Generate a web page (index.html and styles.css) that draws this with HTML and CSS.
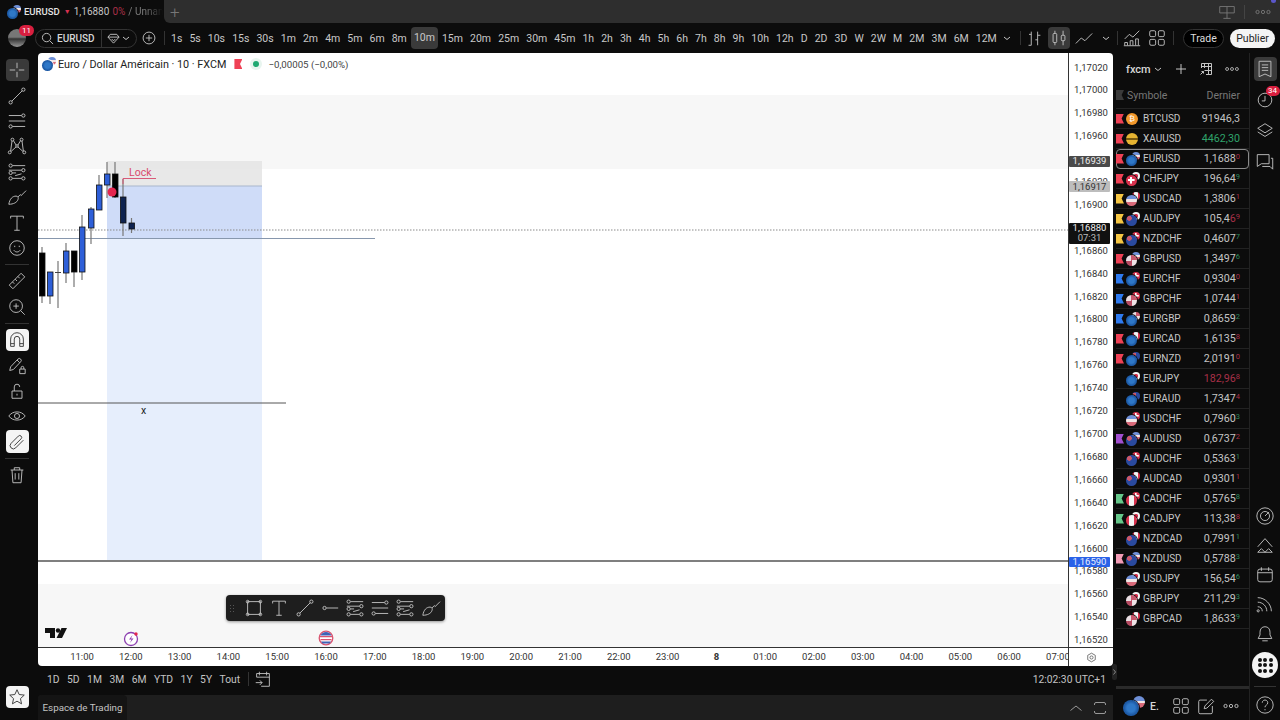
FILE: index.html
```html
<!DOCTYPE html>
<html lang="fr">
<head>
    <meta charset="UTF-8">
    <meta name="viewport" content="width=device-width, initial-scale=1.0">
    <title>EURUSD 1,16880</title>
    <link rel="stylesheet" href="styles.css">
</head>
<body>
    <svg class="icon-defs" width="0" height="0">
        <symbol id="i-line" viewBox="0 0 22 22"><circle cx="4" cy="18" r="1.8"/><circle cx="18" cy="4" r="1.8"/><path d="M5.3 16.7 16.7 5.3"/></symbol>
        <symbol id="i-lines" viewBox="0 0 22 22"><circle cx="18" cy="5" r="1.8"/><circle cx="4" cy="17" r="1.8"/><path d="M2 5h14M2 11h18M6 17h14"/></symbol>
        <symbol id="i-pitch" viewBox="0 0 22 22"><circle cx="6" cy="4" r="1.6"/><circle cx="16" cy="4" r="1.6"/><circle cx="3" cy="18" r="1.6"/><circle cx="19" cy="18" r="1.6"/><circle cx="11" cy="11" r="1.4"/><path d="M5.5 5.5 4 16.5M16.5 5.5 18 16.5M7 5l3 5M15 5l-3 5M4.500 17l5.500-5M17.500 17l-5.500-5"/></symbol>
        <symbol id="i-fib" viewBox="0 0 22 22"><circle cx="4" cy="4" r="1.8"/><circle cx="18" cy="9" r="1.8"/><circle cx="4" cy="12" r="1.8"/><circle cx="18" cy="18" r="1.8"/><circle cx="4" cy="18" r="1.8"/><path d="M6 4h14M2 9h14M6 12h4M6 18h10M9 15l7-2" /></symbol>
        <symbol id="i-brush" viewBox="0 0 22 22"><path d="M2 19c1-6 4-9 8-9 2 0 3 2 2 4-1 3-5 5-10 5ZM12 11l3-3M15 10l6-6"/></symbol>
        <symbol id="i-text" viewBox="0 0 22 22"><path d="M4 6V3.500h14V6M11 3.500V19M8 19h6"/></symbol>
        <symbol id="i-dots" viewBox="0 0 22 22"><circle cx="5" cy="11" r="1.800"/><circle cx="11" cy="11" r="1.800"/><circle cx="17" cy="11" r="1.800"/></symbol>
        <symbol id="i-grid" viewBox="0 0 22 22"><rect x="3" y="3" width="6.500" height="6.500" rx="1.500"/><rect x="12.500" y="3" width="6.500" height="6.500" rx="1.500"/><rect x="3" y="12.500" width="6.500" height="6.500" rx="1.500"/><rect x="12.500" y="12.500" width="6.500" height="6.500" rx="1.500"/></symbol>
        <symbol id="i-chevron" viewBox="0 0 10 10"><path d="M2 4l3 2.500L8 4"/></symbol>
    </svg>

    <div class="tabbar">
        <div class="tab-active">
            <span class="pair"><i class="eur"></i><i class="usd"></i></span>
            <span class="tab-sym">EURUSD</span>
            <span class="tab-down">▼</span>
            <span class="tab-price">1,16880</span>
            <span class="tab-pct">0%</span>
            <span class="tab-name">/ Unnan</span>
        </div>
        <div class="tab-rest">
            <span class="tab-plus">+</span>
            <span class="spacer"></span>
            <svg class="ico tab-monitor" viewBox="0 0 22 22"><path d="M3 5h16v7H3zM11 5v13M7 18h8M8 12v0"/></svg>
            <span class="tab-sep"></span>
            <span class="tab-more"><svg class="ico"><use href="#i-dots"/></svg><b></b></span>
        </div>
    </div>

    <div class="toolbar">
        <div class="avatar"><span class="avatar-badge">11</span></div>
        <div class="search">
            <div class="search-left">
                <svg class="ico-s" viewBox="0 0 14 14"><circle cx="6" cy="6" r="4.500"/><path d="m9.500 9.500 3.500 3.500"/></svg>
                <span>EURUSD</span>
            </div>
            <div class="search-right">
                <svg class="ico-s" viewBox="0 0 14 14"><path d="M3.500 2.500h7L13 5.500 7 12 1 5.500ZM1 5.500h12M5 7.500 7 9.500 9 7.500"/></svg>
                <svg class="ico-c"><use href="#i-chevron"/></svg>
            </div>
        </div>
        <svg class="ico plus-circle" viewBox="0 0 22 22"><circle cx="11" cy="11" r="6.500"/><path d="M11 7.500v7M7.500 11h7"/></svg>
        <span class="tool-sep first-sep"></span>
        <div class="frames">
            <span>1s</span><span>5s</span><span>10s</span><span>15s</span><span>30s</span><span>1m</span><span>2m</span><span>4m</span><span>5m</span><span>6m</span><span>8m</span><span class="frame-on">10m</span><span>15m</span><span>20m</span><span>25m</span><span>30m</span><span>45m</span><span>1h</span><span>2h</span><span>3h</span><span>4h</span><span>5h</span><span>6h</span><span>7h</span><span>8h</span><span>9h</span><span>10h</span><span>12h</span><span>D</span><span>2D</span><span>3D</span><span>W</span><span>2W</span><span>M</span><span>2M</span><span>3M</span><span>6M</span><span>12M</span>
        </div>
        <svg class="ico-c frames-more"><use href="#i-chevron"/></svg>
        <span class="tool-sep"></span>
        <svg class="ico bars-ico" viewBox="0 0 22 22"><path d="M8 4v15M8 7H5.500M5 19h3M15 4v15M15 8h3M12.500 13H15"/></svg>
        <span class="candle-on"><svg class="ico" viewBox="0 0 22 22"><rect x="4.500" y="6" width="4" height="10" rx="1"/><rect x="13.500" y="8" width="4" height="6" rx="1"/><path d="M6.500 3v3M6.500 16v3M15.500 3v5M15.500 14v5"/></svg></span>
        <svg class="ico line-ico" viewBox="0 0 22 22"><path d="M2 17l6-6 4 3 8-8"/></svg>
        <svg class="ico-c line-more"><use href="#i-chevron"/></svg>
        <span class="tool-sep"></span>
        <svg class="ico chart-ico" viewBox="0 0 22 22"><path d="M3 12l5-5 4 3 7-7M3 19v-3h3v3M9 19v-5h3v5M15 19v-7h3v7M2 19.500h18"/></svg>
        <svg class="ico grid-ico"><use href="#i-grid"/></svg>
        <span class="tool-sep"></span>
        <span class="btn-trade">Trade</span>
        <span class="btn-publish">Publier</span>
    </div>

    <div class="main">
        <div class="tools">
            <span class="tool tool-active"><svg class="ico" viewBox="0 0 22 22"><path d="M11 3v6M11 13v6M3 11h6M13 11h6"/></svg></span>
            <span class="tool"><svg class="ico"><use href="#i-line"/></svg></span>
            <span class="tool"><svg class="ico"><use href="#i-lines"/></svg></span>
            <span class="tool"><svg class="ico"><use href="#i-pitch"/></svg></span>
            <span class="tool"><svg class="ico"><use href="#i-fib"/></svg></span>
            <span class="tool"><svg class="ico"><use href="#i-brush"/></svg></span>
            <span class="tool"><svg class="ico"><use href="#i-text"/></svg></span>
            <span class="tool"><svg class="ico" viewBox="0 0 22 22"><circle cx="11" cy="11" r="8"/><path d="M8.500 8.500v1.500M13.500 8.500v1.500M7.500 13.500c2 2.500 5 2.500 7 0"/></svg></span>
            <span class="tool-div"></span>
            <span class="tool"><svg class="ico" viewBox="0 0 22 22"><path d="M2.500 15.500 15.500 2.500l4 4-13 13ZM6 12l2 2M9 9l2 2M12 6l2 2"/></svg></span>
            <span class="tool"><svg class="ico" viewBox="0 0 22 22"><circle cx="10" cy="10" r="7"/><path d="M15 15l4.500 4.500M10 7v6M7 10h6"/></svg></span>
            <span class="tool-div"></span>
            <span class="tool tool-white"><svg class="ico" viewBox="0 0 22 22"><path d="M4 18V10a7 7 0 0 1 14 0v8h-4v-8a3 3 0 0 0-6 0v8ZM4 15h4M14 15h4"/></svg></span>
            <span class="tool"><svg class="ico" viewBox="0 0 22 22"><path d="M3 17l1-4 8-8.500a2 2 0 0 1 3 3L7 16ZM11 5.500l3 3M14 15.500h6v5h-6zM15.500 15.500v-1.500a1.500 1.500 0 0 1 3 0v1.500"/></svg></span>
            <span class="tool"><svg class="ico" viewBox="0 0 22 22"><path d="M5.500 11h11v8h-11zM8 11V6.500a3 3 0 0 1 6 0M11 14v2"/></svg></span>
            <span class="tool"><svg class="ico" viewBox="0 0 22 22"><path d="M2 11c4-6 14-6 18 0-4 6-14 6-18 0Z"/><circle cx="11" cy="11" r="2.800"/></svg></span>
            <span class="tool tool-white"><svg class="ico" viewBox="0 0 22 22"><path d="M8 15l7.500-7.500a2.100 2.100 0 0 0-3-3L4.500 12.500a3.500 3.500 0 0 0 5 5L18 9"/></svg></span>
            <span class="tool-div"></span>
            <span class="tool"><svg class="ico" viewBox="0 0 22 22"><path d="M4 5.500h14M8 5.500V3h6v2.500M5.500 5.500l1 14h9l1-14M9 9v7M13 9v7"/></svg></span>
            <span class="spacer"></span>
            <span class="tool tool-white tool-star"><svg class="ico" viewBox="0 0 22 22"><path d="m11 3 2.400 5.300 5.600.6-4.200 3.900 1.200 5.700-5-2.900-5 2.900 1.200-5.700L3 8.900l5.600-.6Z"/></svg></span>
        </div>

        <div class="center">
            <div class="chart">
                <div class="pane">
                    <div class="legend">
                        <span class="pair"><i class="eur"></i><i class="usd"></i></span>
                        <span class="legend-title">Euro / Dollar Américain · 10 · FXCM</span>
                        <span class="flag flag-red legend-flag"></span>
                        <span class="legend-dot"></span>
                        <span class="legend-change">−0,00005 (−0,00%)</span>
                    </div>

                    <svg class="plot" viewBox="38 53 1030 594" width="1030" height="594">
                        <rect x="38" y="95" width="1030" height="74" fill="#f7f7f7"/>
                        <rect x="38" y="584" width="1030" height="63" fill="#f7f7f7"/>
                        <!-- position box -->
                        <rect x="107" y="161" width="155" height="25" fill="#e4e4e4" opacity=".85"/>
                        <rect x="107" y="186" width="155" height="52" fill="#cfdcf8"/>
                        <rect x="107" y="238" width="155" height="322" fill="#e6eefc"/>
                        <path d="M107 186h155" stroke="#a9b6cc"/>
                        <path d="M38 230h1030" stroke="#8a8a8a" stroke-dasharray="1.500 1.500"/>
                        <path d="M38 238.500h337" stroke="#8797ad"/>
                        <path d="M38 403h248" stroke="#555"/>
                        <path d="M38 561h1030" stroke="#555" stroke-width="1.500"/>
                        <!-- wicks -->
                        <g stroke="#777" stroke-width="1.200">
                            <path d="M42 247v56M50 272v32M58 261v47M66 243v40M74 251v36M82 215v65M91 207v37M99 175v35M107 162v36M115 162v36M123 179v57M131.500 218v15"/>
                        </g>
                        <!-- candles -->
                        <g stroke="#111" stroke-width=".8">
                            <rect x="39.500" y="253" width="5.500" height="43" fill="#000"/>
                            <rect x="47.500" y="272" width="5.500" height="24" fill="#2e5fd8"/>
                            <rect x="63.500" y="251" width="5.500" height="22" fill="#2e5fd8"/>
                            <rect x="71.500" y="251" width="5.500" height="21" fill="#000"/>
                            <rect x="79.500" y="227" width="5.500" height="45" fill="#2e5fd8"/>
                            <rect x="88.500" y="209" width="5.500" height="19" fill="#2e5fd8"/>
                            <rect x="96.500" y="185" width="5.500" height="25" fill="#2e5fd8"/>
                            <rect x="104.500" y="174" width="5.500" height="11" fill="#2e5fd8"/>
                            <rect x="112.500" y="174" width="5.500" height="23" fill="#000"/>
                            <rect x="120.500" y="197" width="5.500" height="26" fill="#0f2350"/>
                            <rect x="129" y="223" width="5.500" height="6" fill="#0f2350"/>
                        </g>
                        <path d="M55 272.500h6" stroke="#444"/>
                        <circle cx="112" cy="192" r="4.500" fill="#e5264f"/>
                        <path d="M123 184v-5.500h33" fill="none" stroke="#d95a78"/>
                        <text x="129" y="175.500" class="plot-lock">Lock</text>
                        <text x="141" y="414" class="plot-x">x</text>
                        <!-- logo -->
                        <path d="M45 628h10v10h-5v-5h-5ZM67 628l-5 10h-5.500l5-10Z" fill="#111"/>
                        <circle cx="58" cy="630.500" r="2.200" fill="#111"/>
                        <!-- events -->
                        <circle cx="131" cy="639" r="6.500" fill="#fff" stroke="#8c3fb0" stroke-width="1.300"/>
                        <path d="m132.500 635-3.500 4.500h2.500l-1.500 3.500 3.500-4.500H131Z" fill="#8c3fb0"/>
                        <circle cx="136" cy="634" r="1.700" fill="#e5264f"/>
                        <circle cx="326" cy="638" r="6.800" fill="#fff" stroke="#d9536f" stroke-width="1.300"/>
                        <path d="M320 636h12v1.300h-12ZM320.500 639h11v1.300h-11Z" fill="#d9536f"/>
                        <path d="M320.500 635.500a6 6 0 0 1 11 0ZM321 641.500h10l-1.500 2h-7Z" fill="#3f62b5"/>
                    </svg>

                    <div class="draw-bar">
                        <span class="draw-grip"></span>
                        <svg class="ico" viewBox="0 0 22 22"><rect x="4" y="4" width="14" height="14"/><circle cx="4" cy="4" r="1.500"/><circle cx="18" cy="4" r="1.500"/><circle cx="4" cy="18" r="1.500"/><circle cx="18" cy="18" r="1.500"/></svg>
                        <svg class="ico"><use href="#i-text"/></svg>
                        <svg class="ico"><use href="#i-line"/></svg>
                        <svg class="ico" viewBox="0 0 22 22"><circle cx="5" cy="11" r="1.800"/><path d="M7 11h13"/></svg>
                        <svg class="ico"><use href="#i-fib"/></svg>
                        <svg class="ico"><use href="#i-lines"/></svg>
                        <svg class="ico"><use href="#i-fib"/></svg>
                        <svg class="ico"><use href="#i-brush"/></svg>
                    </div>
                </div>

                <div class="axis-y">
                    <span>1,17020</span><span>1,17000</span><span>1,16980</span><span>1,16960</span><span class="hid">1,16940</span><span>1,16920</span><span>1,16900</span><span class="hid">1,16880</span><span>1,16860</span><span>1,16840</span><span>1,16820</span><span>1,16800</span><span>1,16780</span><span>1,16760</span><span>1,16740</span><span>1,16720</span><span>1,16700</span><span>1,16680</span><span>1,16660</span><span>1,16640</span><span>1,16620</span><span>1,16600</span><span>1,16580</span><span>1,16560</span><span>1,16540</span><span>1,16520</span>
                    <div class="tag tag-dark">1,16939</div>
                    <div class="tag tag-grey">1,16917</div>
                    <div class="tag tag-black">1,16880<br><em>07:31</em></div>
                    <div class="tag tag-blue">1,16590</div>
                </div>

                <div class="axis-x">
                    <span>11:00</span><span>12:00</span><span>13:00</span><span>14:00</span><span>15:00</span><span>16:00</span><span>17:00</span><span>18:00</span><span>19:00</span><span>20:00</span><span>21:00</span><span>22:00</span><span>23:00</span><span class="day">8</span><span>01:00</span><span>02:00</span><span>03:00</span><span>04:00</span><span>05:00</span><span>06:00</span><span>07:00</span>
                </div>
                <div class="axis-corner">
                    <svg class="ico-m" viewBox="0 0 14 14"><path d="M7 1.500 11.800 4.200v5.600L7 12.500 2.200 9.800V4.200Z"/><circle cx="7" cy="7" r="2"/></svg>
                </div>
            </div>

            <div class="range">
                <span>1D</span><span>5D</span><span>1M</span><span>3M</span><span>6M</span><span>YTD</span><span>1Y</span><span>5Y</span><span>Tout</span>
                <span class="range-sep"></span>
                <svg class="ico range-ico" viewBox="0 0 22 22"><path d="M4 9V5h14v14H9M7 3v4M15 3v4M4 9h14M3 15h7M7.500 12.500 10 15l-2.500 2.500"/></svg>
                <span class="spacer"></span>
                <span class="range-clock">12:02:30 UTC+1</span>
                <span class="collapse-handle"><svg viewBox="0 0 5 16"><path d="M1.500 5.500 3.500 8l-2 2.500"/></svg></span>
            </div>

            <div class="status">
                <span class="status-tab">Espace de Trading</span>
                <span class="spacer"></span>
                <svg class="ico-m" viewBox="0 0 14 14"><path d="M1.500 9.500 7 5l5.500 4.500"/></svg>
                <svg class="ico-m status-max" viewBox="0 0 14 14"><path d="M1.500 4V3a1.500 1.500 0 0 1 1.500-1.500h8A1.500 1.500 0 0 1 12.500 3v1M1.500 10v1A1.500 1.500 0 0 0 3 12.500h8a1.500 1.500 0 0 0 1.500-1.500v-1"/></svg>
            </div>
        </div>

        <div class="watch">
            <div class="watch-top">
                <span class="watch-name">fxcm</span>
                <svg class="ico-c"><use href="#i-chevron"/></svg>
                <svg class="ico-m watch-add" viewBox="0 0 14 14"><path d="M7 2v10M2 7h10"/></svg>
                <svg class="ico-m watch-table" viewBox="0 0 14 14"><path d="M2.500 6V1.500h10v11H7M2.500 4.500h10M5.500 1.500V6M9.500 1.500v11M5.500 8.500h7M1.500 12.500l3-3M2.500 9.500h2v2"/></svg>
                <svg class="ico watch-more"><use href="#i-dots"/></svg>
            </div>
            <div class="watch-head"><span class="flag flag-dim"></span><span>Symbole</span><span class="spacer"></span><span>Dernier</span></div>
            <div class="rows">
                <div class="row"><span class="flag flag-red"></span><span class="pair"><i class="btc">₿</i></span><span class="sym">BTCUSD</span><span class="price">91946,3</span></div>
                <div class="row"><span class="flag flag-red"></span><span class="pair"><i class="xau"></i></span><span class="sym">XAUUSD</span><span class="price up">4462,30</span></div>
                <div class="row row-on"><span class="flag flag-red"></span><span class="pair"><i class="eur"></i><i class="usd"></i></span><span class="sym">EURUSD</span><span class="price">1,1688<sup class="dn">0</sup></span></div>
                <div class="row"><span class="flag flag-red"></span><span class="pair"><i class="chf"></i><i class="jpy"></i></span><span class="sym">CHFJPY</span><span class="price">196,64<sup class="gr">9</sup></span></div>
                <div class="row"><span class="flag flag-yellow"></span><span class="pair"><i class="usd"></i><i class="cad"></i></span><span class="sym">USDCAD</span><span class="price">1,3806<sup class="dn">1</sup></span></div>
                <div class="row"><span class="flag flag-yellow"></span><span class="pair"><i class="aud"></i><i class="jpy"></i></span><span class="sym">AUDJPY</span><span class="price">105,4<b class="dn">6</b><sup class="dn">9</sup></span></div>
                <div class="row"><span class="flag flag-yellow"></span><span class="pair"><i class="aud"></i><i class="chf"></i></span><span class="sym">NZDCHF</span><span class="price">0,4607<sup class="gr">7</sup></span></div>
                <div class="row"><span class="flag flag-red"></span><span class="pair"><i class="gbp"></i><i class="usd"></i></span><span class="sym">GBPUSD</span><span class="price">1,3497<sup class="gr">6</sup></span></div>
                <div class="row"><span class="flag flag-blue"></span><span class="pair"><i class="eur"></i><i class="chf"></i></span><span class="sym">EURCHF</span><span class="price">0,9304<sup class="dn">0</sup></span></div>
                <div class="row"><span class="flag flag-blue"></span><span class="pair"><i class="gbp"></i><i class="chf"></i></span><span class="sym">GBPCHF</span><span class="price">1,0744<sup class="dn">1</sup></span></div>
                <div class="row"><span class="flag flag-blue"></span><span class="pair"><i class="eur"></i><i class="gbp"></i></span><span class="sym">EURGBP</span><span class="price">0,8659<sup class="gr">2</sup></span></div>
                <div class="row"><span class="flag flag-red"></span><span class="pair"><i class="eur"></i><i class="cad"></i></span><span class="sym">EURCAD</span><span class="price">1,6135<sup class="dn">8</sup></span></div>
                <div class="row"><span class="flag flag-red"></span><span class="pair"><i class="eur"></i><i class="aud"></i></span><span class="sym">EURNZD</span><span class="price">2,0191<sup class="dn">0</sup></span></div>
                <div class="row"><span class="flag"></span><span class="pair"><i class="eur"></i><i class="jpy"></i></span><span class="sym">EURJPY</span><span class="price down">182,96<sup class="dn">8</sup></span></div>
                <div class="row"><span class="flag"></span><span class="pair"><i class="eur"></i><i class="aud"></i></span><span class="sym">EURAUD</span><span class="price">1,7347<sup class="dn">4</sup></span></div>
                <div class="row"><span class="flag"></span><span class="pair"><i class="usd"></i><i class="chf"></i></span><span class="sym">USDCHF</span><span class="price">0,7960<sup class="gr">3</sup></span></div>
                <div class="row"><span class="flag flag-purple"></span><span class="pair"><i class="aud"></i><i class="usd"></i></span><span class="sym">AUDUSD</span><span class="price">0,6737<sup class="dn">2</sup></span></div>
                <div class="row"><span class="flag"></span><span class="pair"><i class="aud"></i><i class="chf"></i></span><span class="sym">AUDCHF</span><span class="price">0,5363<sup class="gr">1</sup></span></div>
                <div class="row"><span class="flag"></span><span class="pair"><i class="aud"></i><i class="cad"></i></span><span class="sym">AUDCAD</span><span class="price">0,9301<sup class="dn">1</sup></span></div>
                <div class="row"><span class="flag flag-green"></span><span class="pair"><i class="cad"></i><i class="chf"></i></span><span class="sym">CADCHF</span><span class="price">0,5765<sup class="gr">8</sup></span></div>
                <div class="row"><span class="flag flag-green"></span><span class="pair"><i class="cad"></i><i class="jpy"></i></span><span class="sym">CADJPY</span><span class="price">113,38<sup class="dn">8</sup></span></div>
                <div class="row"><span class="flag"></span><span class="pair"><i class="aud"></i><i class="cad"></i></span><span class="sym">NZDCAD</span><span class="price">0,7991<sup class="gr">1</sup></span></div>
                <div class="row"><span class="flag flag-pink"></span><span class="pair"><i class="aud"></i><i class="usd"></i></span><span class="sym">NZDUSD</span><span class="price">0,5788<sup class="gr">3</sup></span></div>
                <div class="row"><span class="flag"></span><span class="pair"><i class="usd"></i><i class="jpy"></i></span><span class="sym">USDJPY</span><span class="price">156,54<sup class="gr">6</sup></span></div>
                <div class="row"><span class="flag"></span><span class="pair"><i class="gbp"></i><i class="jpy"></i></span><span class="sym">GBPJPY</span><span class="price">211,29<sup class="gr">3</sup></span></div>
                <div class="row"><span class="flag"></span><span class="pair"><i class="gbp"></i><i class="cad"></i></span><span class="sym">GBPCAD</span><span class="price">1,8633<sup class="gr">9</sup></span></div>
            </div>
            <span class="spacer"></span>
            <div class="watch-foot">
                <span class="pair pair-big"><i class="eur"></i><i class="usd"></i></span>
                <span class="foot-name">E.</span>
                <span class="spacer"></span>
                <svg class="ico"><use href="#i-grid"/></svg>
                <svg class="ico" viewBox="0 0 22 22"><path d="M18 11v7a1.500 1.500 0 0 1-1.500 1.500h-12A1.500 1.500 0 0 1 3 18V6a1.500 1.500 0 0 1 1.500-1.500H12M9 14l.7-3L17 3.500 19.500 6l-7.500 7.300Z"/></svg>
                <svg class="ico"><use href="#i-dots"/></svg>
            </div>
        </div>

        <div class="rail">
            <span class="rail-btn rail-on"><svg class="ico" viewBox="0 0 22 22"><path d="M4.500 2.500h13v17L11 16.500l-6.500 3ZM7.500 6.500h7M7.500 9.500h7M7.500 12.500h7"/></svg></span>
            <span class="rail-btn rail-alert"><svg class="ico" viewBox="0 0 22 22"><circle cx="11" cy="11" r="7.500"/><path d="M11 6.500V12H7.500"/></svg><b class="rail-badge">34</b></span>
            <span class="rail-btn rail-layers"><svg class="ico" viewBox="0 0 22 22"><path d="m11 3 8 5-8 5-8-5ZM3 12l8 5 8-5"/></svg></span>
            <span class="rail-btn"><svg class="ico" viewBox="0 0 22 22"><path d="M2.500 4h13v10H7l-4.500 3ZM17.500 8h2v12l-3-3H8"/></svg></span>
            <span class="spacer"></span>
            <span class="rail-btn"><svg class="ico" viewBox="0 0 22 22"><circle cx="11" cy="11" r="9"/><circle cx="11" cy="11" r="5"/><path d="m11 11 4.500-4.500"/></svg></span>
            <span class="rail-btn"><svg class="ico" viewBox="0 0 22 22"><path d="m3 13 8-9 8 9M3 19l4-4 4 4 4-4 4 4M3 19h16"/></svg></span>
            <span class="rail-btn"><svg class="ico" viewBox="0 0 22 22"><rect x="3" y="4.500" width="16" height="14" rx="2.500"/><path d="M7 2.500v4M15 2.500v4M3 8.500h16"/></svg></span>
            <span class="rail-btn"><svg class="ico" viewBox="0 0 22 22"><path d="M3 4c8 0 15 7 15 15M3 9c5.500 0 10 4.500 10 10M3 14c3 0 5 2 5 5"/><circle cx="3.500" cy="18.500" r="1.200"/></svg></span>
            <span class="rail-btn"><svg class="ico" viewBox="0 0 22 22"><path d="M11 3c-3.500 0-5.500 2.500-5.500 6v3L3.500 16h15l-2-4V9c0-3.500-2-6-5.500-6ZM8 18.500h6"/></svg></span>
            <span class="rail-dots"><i></i><i></i><i></i><i></i><i></i><i></i><i></i><i></i><i></i></span>
            <span class="rail-div"></span>
            <span class="rail-btn"><svg class="ico" viewBox="0 0 22 22"><circle cx="11" cy="11" r="9"/><path d="M8 8.500a3 3 0 1 1 4.500 2.600c-1 .6-1.500 1.100-1.500 2.400M11 15.500v1.300"/></svg></span>
        </div>
    </div>
</body>
</html>
```

FILE: styles.css
```css
* {
    box-sizing: border-box;
}
html, body {
    margin: 0;
    height: 720px;
    overflow: hidden;
}
body {
    font-family: Roboto, "Liberation Sans", sans-serif;
    background-color: #0c0c0c;
    color: #d6d6d6;
    font-size: 11px;
}
.icon-defs {
    position: absolute;
}
.spacer {
    flex: 1;
}
.ico, .ico-s, .ico-m, .ico-c {
    fill: none;
    stroke: #c4c4c4;
    stroke-width: 1;
    flex: none;
}
.ico {
    width: 20px;
    height: 20px;
}
.ico-s {
    width: 13px;
    height: 13px;
}
.ico-m {
    width: 14px;
    height: 14px;
}
.ico-c {
    width: 10px;
    height: 10px;
}

/* pair icons */
.pair {
    --ring: #0c0c0c;
    position: relative;
    display: inline-block;
    width: 14px;
    height: 14px;
    flex: none;
}
.pair i {
    position: absolute;
    left: 0;
    bottom: 0;
    width: 11px;
    height: 11px;
    border-radius: 50%;
    font-style: normal;
    z-index: 1;
    box-shadow: 0 0 0 1px var(--ring);
}
.pair i + i {
    left: auto;
    right: 0;
    top: 0;
    bottom: auto;
    width: 8px;
    height: 8px;
    z-index: 0;
    box-shadow: none;
}
.legend .pair {
    --ring: #fff;
}
.eur {
    background: radial-gradient(circle, #2f78c8 0 35%, #1d5aa6 60%);
}
.usd {
    background: linear-gradient(180deg, #6f90d8 0 40%, #f2e6e6 40% 60%, #d96a7a 60%);
}
.gbp {
    background: conic-gradient(#c9586c 0 25%, #efe3e6 25% 50%, #b74c63 50% 75%, #e9dde2 75%);
}
.jpy {
    background: radial-gradient(circle, #d9304f 0 35%, #f4f4f4 40%);
}
.chf {
    background: linear-gradient(#fff, #fff) center / 60% 20% no-repeat, linear-gradient(#fff, #fff) center / 20% 60% no-repeat, #d8324e;
}
.cad {
    background: linear-gradient(90deg, #d8324e 0 25%, #f4f4f4 25% 75%, #d8324e 75%);
}
.aud {
    background: radial-gradient(circle at 30% 30%, #c9586c 0 20%, #2a4aa0 25%);
}
.pair .btc {
    bottom: 1px;
    width: 12px;
    height: 12px;
    background-color: #f2982c;
    color: #fff;
    font-size: 8px;
    line-height: 12px;
    text-align: center;
}
.pair .xau {
    bottom: 1px;
    width: 12px;
    height: 12px;
    background: linear-gradient(#0000 0 45%, #7a5a10 45% 55%, #0000 55%), #e6b432;
}
.pair-big {
    width: 22px;
    height: 20px;
}
.pair-big i {
    width: 16px;
    height: 16px;
}
.pair-big i + i {
    width: 12px;
    height: 12px;
}

/* flags */
.flag {
    display: block;
    width: 8px;
    height: 10px;
    flex: none;
    clip-path: polygon(0 0, 100% 0, 70% 50%, 100% 100%, 0 100%);
}
.flag-red { background-color: #ef4155; }
.flag-yellow { background-color: #f5c542; }
.flag-blue { background-color: #2f7bf0; }
.flag-purple { background-color: #a24fd0; }
.flag-green { background-color: #66c78a; }
.flag-pink { background-color: #f29bb5; }
.flag-dim { background-color: #3a3a3a; }

/* tabs */
.tabbar {
    display: flex;
    height: 23px;
}
.tab-active {
    display: flex;
    align-items: center;
    width: 164px;
    padding-left: 7px;
    gap: 3px;
    font-size: 10px;
    white-space: nowrap;
    overflow: hidden;
}
.tab-sym {
    font-weight: 500;
    font-size: 9.500px;
    color: #e4e4e4;
}
.tab-down {
    color: #d6304f;
    font-size: 7px;
    margin-left: 1px;
}
.tab-price {
    color: #c4c4c4;
}
.tab-pct {
    color: #a83048;
}
.tab-name {
    color: #7c7c7c;
    -webkit-mask-image: linear-gradient(90deg, #000 50%, #0000);
    mask-image: linear-gradient(90deg, #000 50%, #0000);
}
.tab-rest {
    flex: 1;
    display: flex;
    align-items: center;
    background-color: #2e2e2e;
    border-bottom-left-radius: 6px;
    padding: 0 7px 0 6px;
}
.tab-plus {
    color: #777;
    font-size: 17px;
    font-weight: 300;
}
.tab-monitor {
    stroke: #777;
}
.tab-sep {
    width: 1px;
    height: 14px;
    background-color: #444;
    margin: 0 8px 0 7px;
}
.tab-more {
    position: relative;
    display: flex;
}
.tab-more .ico {
    stroke: #777;
}
.tab-more b {
    position: absolute;
    top: -4px;
    right: -3px;
    width: 5px;
    height: 5px;
    border-radius: 50%;
    background-color: #5b57c9;
}

/* toolbar */
.toolbar {
    display: flex;
    align-items: center;
    height: 30px;
    padding-left: 8px;
}
.avatar {
    position: relative;
    width: 18px;
    height: 18px;
    border-radius: 50%;
    background: linear-gradient(#777 0 45%, #333 55%, #999);
    flex: none;
}
.avatar-badge {
    position: absolute;
    top: -4px;
    left: 11px;
    width: 15px;
    height: 11px;
    border-radius: 6px;
    background-color: #d81f3f;
    color: #fff;
    font-size: 8px;
    line-height: 11px;
    text-align: center;
}
.search {
    display: flex;
    align-items: center;
    width: 102px;
    height: 19px;
    margin-left: 9px;
    border: 1px solid #333;
    border-radius: 10px;
    flex: none;
}
.search-left {
    display: flex;
    align-items: center;
    gap: 3px;
    width: 66px;
    padding-left: 5px;
    height: 100%;
    border-right: 1px solid #333;
    font-weight: 500;
    font-size: 10px;
}
.search-right {
    display: flex;
    align-items: center;
    gap: 1px;
    padding-left: 5px;
}
.plus-circle {
    margin-left: 2px;
    margin-right: 5px;
}
.tool-sep {
    width: 1px;
    height: 14px;
    background-color: #333;
    flex: none;
}
.first-sep {
    margin-right: 6px;
}
.frames {
    display: flex;
    align-items: center;
    width: 826px;
    flex: none;
    justify-content: space-between;
    font-size: 10.500px;
    color: #c8c8c8;
}
.frame-on {
    background-color: #3a3a3a;
    border-radius: 4px;
    padding: 0 3px;
    margin: 0 -3px;
    height: 22px;
    line-height: 22px;
}
.frames-more {
    margin: 0 8px 0 5px;
}
.bars-ico {
    margin: 0 4px 0 3px;
}
.candle-on {
    display: flex;
    align-items: center;
    justify-content: center;
    width: 22px;
    height: 22px;
    background-color: #3a3a3a;
    border-radius: 4px;
    flex: none;
}
.line-ico {
    margin-left: 4px;
}
.line-more {
    margin: 0 6px 0 7px;
}
.chart-ico {
    margin-left: 4px;
}
.grid-ico {
    margin: 0 6px 0 5px;
}
.btn-trade {
    width: 41px;
    height: 19px;
    margin-left: 9px;
    border: 1px solid #333;
    border-radius: 10px;
    background-color: #000;
    text-align: center;
    line-height: 17px;
    font-size: 10.500px;
    color: #ddd;
    flex: none;
}
.btn-publish {
    width: 45px;
    height: 19px;
    margin-left: 6px;
    border-radius: 10px;
    background-color: #f4f4f4;
    color: #222;
    text-align: center;
    line-height: 19px;
    font-size: 10.500px;
    flex: none;
}

/* layout */
.main {
    display: flex;
    height: 667px;
}
.tools {
    display: flex;
    flex-direction: column;
    align-items: center;
    width: 38px;
    padding: 6px 4px 12px 0;
    flex: none;
    gap: 3px;
}
.tool {
    display: flex;
    align-items: center;
    justify-content: center;
    width: 23px;
    height: 22.400px;
    border-radius: 4px;
    flex: none;
}
.tool-active {
    background-color: #3a3a3a;
}
.tool-white {
    background-color: #f4f4f4;
}
.tool-white .ico {
    stroke: #333;
}
.tool-div {
    width: 24px;
    height: 1px;
    margin: 2px 0;
    background-color: #333;
    flex: none;
}
.center {
    display: flex;
    flex-direction: column;
    width: 1075px;
    flex: none;
}

/* chart */
.chart {
    display: grid;
    grid-template-columns: 1030px 45px;
    grid-template-rows: 594px 19px;
    height: 613px;
    flex: none;
    background-color: #fff;
    border-radius: 4px;
    overflow: hidden;
    color: #333;
}
.pane {
    position: relative;
}
.plot {
    display: block;
}
.plot-lock {
    font: 10.500px Roboto, sans-serif;
    fill: #d94a6c;
}
.plot-x {
    font: 10.500px Roboto, sans-serif;
    fill: #222;
}
.legend {
    position: absolute;
    top: 3px;
    left: 4px;
    display: flex;
    align-items: center;
    height: 16px;
    z-index: 1;
}
.legend-title {
    margin-left: 2px;
    font-size: 10.800px;
    color: #222;
}
.legend-flag {
    margin-left: 8px;
}
.legend-dot {
    width: 6px;
    height: 6px;
    margin: 0 9px 0 11px;
    border-radius: 50%;
    background-color: #1fa971;
    box-shadow: 0 0 0 3px #e8f5ef;
}
.legend-change {
    font-size: 9.700px;
    color: #444;
}
.draw-bar {
    position: absolute;
    left: 188px;
    top: 542px;
    display: flex;
    align-items: center;
    gap: 5.200px;
    width: 219px;
    height: 26px;
    padding-left: 3px;
    border-radius: 4px;
    background-color: #1e1e1e;
    box-shadow: 0 1px 3px #0006;
}
.draw-grip {
    width: 7px;
    height: 9px;
    margin-right: 3px;
    background: radial-gradient(circle, #555 1px, #0000 1px) 0 0 / 3px 3px;
}
.axis-y {
    position: relative;
    display: flex;
    flex-direction: column;
    padding-top: 3.500px;
    border-left: 1px solid #333;
    font-size: 9.500px;
    overflow: hidden;
}
.axis-y span {
    display: block;
    height: 22.920px;
    line-height: 22.920px;
    text-align: center;
    flex: none;
}
.axis-y .hid {
    visibility: hidden;
}
.tag {
    position: absolute;
    left: 0;
    right: 3px;
    text-align: center;
    font-size: 9.500px;
    line-height: 10px;
    border-radius: 1px;
}
.tag-dark {
    top: 103px;
    height: 11px;
    background-color: #4a4a4a;
    color: #eee;
}
.tag-grey {
    top: 128px;
    height: 11px;
    line-height: 11px;
    background-color: #bdbdbd;
    color: #333;
}
.tag-black {
    top: 170px;
    height: 21px;
    background-color: #111;
    color: #eee;
}
.tag-black em {
    font-style: normal;
    color: #bbb;
}
.tag-blue {
    top: 504px;
    height: 10px;
    background-color: #2a62e8;
    color: #e8eeff;
    line-height: 10px;
}
.axis-x {
    display: flex;
    padding-left: 19.600px;
    border-top: 1px solid #333;
    font-size: 9.500px;
    line-height: 18px;
    overflow: hidden;
    white-space: nowrap;
}
.axis-x span {
    width: 48.800px;
    text-align: center;
    flex: none;
}
.axis-x .day {
    font-weight: 700;
}
.axis-corner {
    display: flex;
    align-items: center;
    justify-content: center;
    border-top: 1px solid #333;
    border-left: 1px solid #333;
}
.axis-corner .ico-m {
    stroke: #555;
    width: 11px;
    height: 11px;
}

/* range bar */
.range {
    position: relative;
    display: flex;
    align-items: center;
    gap: 7.500px;
    height: 26px;
    flex: none;
    padding: 0 7px 0 9px;
    font-size: 10.300px;
    color: #c4c4c4;
}
.range-sep {
    width: 1px;
    height: 14px;
    background-color: #333;
}
.range-ico {
    margin-left: -3px;
}
.collapse-handle {
    position: absolute;
    right: -4px;
    top: -2px;
    width: 5px;
    height: 16px;
    background-color: #222;
    border-radius: 2px;
}
.collapse-handle svg {
    display: block;
    fill: none;
    stroke: #888;
}
.status {
    display: flex;
    align-items: center;
    height: 25px;
    flex: none;
    margin-top: 3px;
    padding-right: 6px;
    gap: 10px;
    background-color: #1e1e1e;
    border-top-left-radius: 4px;
}
.status .ico-m {
    stroke: #999;
}
.status-tab {
    display: block;
    width: 89px;
    height: 100%;
    background-color: #141414;
    font-size: 9.800px;
    line-height: 25px;
    text-align: center;
    color: #c4c4c4;
    border-radius: 4px 4px 0 0;
}

/* watchlist */
.watch {
    display: flex;
    flex-direction: column;
    width: 133px;
    margin-left: 3px;
    flex: none;
}
.watch-top {
    display: flex;
    align-items: center;
    height: 32px;
    padding-left: 10px;
}
.watch-name {
    font-size: 11px;
    font-weight: 500;
    margin-right: 2px;
}
.watch-add {
    margin-left: 11px;
}
.watch-table {
    margin-left: 11px;
}
.watch-more {
    margin-left: 10px;
    width: 18px;
}
.watch-head {
    display: flex;
    align-items: center;
    height: 20px;
    padding-right: 9px;
    gap: 3px;
    font-size: 10.500px;
    color: #777;
}
.rows {
    margin-top: 3px;
    border-top: 1px solid #222;
}
.row {
    display: flex;
    align-items: center;
    height: 20px;
    border-bottom: 1px solid #222;
}
.row-on {
    outline: 1px solid #8a8a8a;
    outline-offset: -1px;
    border-radius: 4px;
}
.row .pair {
    margin-left: 2px;
}
.sym {
    width: 55px;
    margin-left: 3px;
    font-size: 10px;
    color: #c8c8c8;
}
.price {
    width: 42px;
    text-align: right;
    font-size: 10.700px;
    line-height: 16px;
    color: #c4c4c4;
    white-space: nowrap;
}
.price b {
    font-weight: 400;
}
.price sup {
    font-size: 7.500px;
    line-height: 0;
    vertical-align: 3px;
}
.up {
    color: #2fa36b;
}
.down, .dn {
    color: #a83048;
}
.gr {
    color: #2f8a5c;
}
.watch-foot {
    display: flex;
    align-items: center;
    gap: 5px;
    height: 34px;
    flex: none;
    padding: 3px 8px 0 7px;
    border-top: 3px solid #2a2a2a;
}
.foot-name {
    font-size: 10.500px;
    font-weight: 500;
}

/* right rail */
.rail {
    display: flex;
    flex-direction: column;
    align-items: center;
    width: 31px;
    padding: 4px 0 4px;
    gap: 7.500px;
    border-left: 1px solid #222;
    flex: none;
}
.rail-btn {
    position: relative;
    display: flex;
    align-items: center;
    justify-content: center;
    width: 23px;
    height: 22px;
    border-radius: 4px;
    flex: none;
}
.rail-on {
    background-color: #3a3a3a;
    height: 24px;
}
.rail-layers {
    margin-top: 2px;
}
.rail-badge {
    position: absolute;
    top: -3px;
    right: -3px;
    width: 14px;
    height: 10px;
    border-radius: 5px;
    background-color: #d81f3f;
    color: #fff;
    font-size: 8px;
    font-weight: 400;
    line-height: 10px;
    text-align: center;
}
.rail-dots {
    display: grid;
    grid-template-columns: repeat(3, 4px);
    gap: 1.500px;
    align-content: center;
    justify-content: center;
    width: 26px;
    height: 26px;
    border-radius: 50%;
    background-color: #f4f4f4;
    flex: none;
}
.rail-dots i {
    width: 4px;
    height: 4px;
    border-radius: 50%;
    background-color: #111;
}
.rail-div {
    width: 22px;
    height: 1px;
    background-color: #333;
    flex: none;
}
```
